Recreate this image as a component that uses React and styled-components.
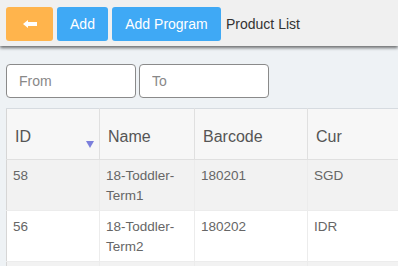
import React from "react";
import styled, { createGlobalStyle } from "styled-components";

const Global = createGlobalStyle`
  html, body { margin: 0; padding: 0; }
  body {
    background: #eef2f5;
    font-family: "Liberation Sans", Arial, sans-serif;
    overflow: hidden;
  }
`;

const Page = styled.div`
  display: flex;
  flex-direction: column;
  width: 398px;
  height: 266px;
  overflow: hidden;
`;

const Toolbar = styled.div`
  display: flex;
  align-items: center;
  gap: 4px;
  height: 46px;
  box-sizing: border-box;
  padding: 2px 6px 0;
  background: #f0f0f0;
  box-shadow: 0 2px 3px rgba(0, 0, 0, 0.55);
  position: relative;
  z-index: 1;
  flex-shrink: 0;
`;

const Button = styled.button`
  height: 34px;
  width: ${(p) => p.$w}px;
  border: none;
  border-radius: 3px;
  background: ${(p) => (p.$variant === "warn" ? "#ffb44c" : "#3fa9f5")};
  color: #fff;
  font-family: "Liberation Sans", Arial, sans-serif;
  font-size: 14px;
  padding: 0;
  display: flex;
  align-items: center;
  justify-content: center;
  cursor: pointer;
`;

const Title = styled.span`
  font-size: 14px;
  color: #333;
  margin-left: 1px;
`;

const Filters = styled.div`
  display: flex;
  gap: 3px;
  padding: 18px 6px 0;
`;

const Input = styled.input`
  width: 130px;
  height: 34px;
  box-sizing: border-box;
  border: 1px solid #8a8a8a;
  border-radius: 4px;
  background: #fff;
  padding: 0 12px;
  font-family: "Liberation Sans", Arial, sans-serif;
  font-size: 14px;
  color: #333;
  outline: none;
  &::placeholder { color: #888; }
`;

const TableWrap = styled.div`
  margin: 10px 0 0 6px;
  overflow: hidden;
`;

const Table = styled.table`
  border-collapse: collapse;
  table-layout: fixed;
  width: 420px;
  border-top: 1px solid #d6dbe0;
  border-left: 1px solid #d6d6d6;
`;

const Th = styled.th`
  position: relative;
  background: #f7f7f7;
  font-weight: normal;
  text-align: left;
  font-size: 16px;
  line-height: 18px;
  color: #555;
  height: 50px;
  box-sizing: border-box;
  padding: 19px 8px 13px;
  border-right: 1px solid #e0e0e0;
  border-bottom: 1px solid #e0e0e0;
`;

const Td = styled.td`
  font-size: 13.5px;
  line-height: 20px;
  color: #666;
  vertical-align: top;
  height: 50px;
  box-sizing: border-box;
  padding: 6px 6px 4px;
  border-right: 1px solid #ececec;
  border-bottom: 1px solid #ececec;
`;

const Tr = styled.tr`
  background: ${(p) => (p.$odd ? "#f2f2f2" : "#ffffff")};
`;

const SortIcon = styled.span`
  position: absolute;
  right: 5px;
  top: 32px;
  width: 0;
  height: 0;
  border-left: 4px solid transparent;
  border-right: 4px solid transparent;
  border-top: 7px solid #7b7fdc;
`;

const rows = [
  { id: "58", name: "18-Toddler-Term1", barcode: "180201", cur: "SGD" },
  { id: "56", name: "18-Toddler-Term2", barcode: "180202", cur: "IDR" },
  { id: "", name: "", barcode: "", cur: "" },
];

export default function App() {
  return (
    <Page>
      <Global />
      <Toolbar>
        <Button $variant="warn" $w={47} aria-label="Back">
          <svg width="14" height="8" viewBox="0 0 14 8">
            <path d="M0 4 L5 0 L5 2 L14 2 L14 6 L5 6 L5 8 Z" fill="#fff" />
          </svg>
        </Button>
        <Button $w={51}>Add</Button>
        <Button $w={109}>Add Program</Button>
        <Title>Product List</Title>
      </Toolbar>
      <Filters>
        <Input placeholder="From" />
        <Input placeholder="To" />
      </Filters>
      <TableWrap>
        <Table>
          <colgroup>
            <col style={{ width: 93 }} />
            <col style={{ width: 95 }} />
            <col style={{ width: 113 }} />
            <col style={{ width: 119 }} />
          </colgroup>
          <thead>
            <tr>
              <Th>
                ID
                <SortIcon />
              </Th>
              <Th>Name</Th>
              <Th>Barcode</Th>
              <Th>Cur</Th>
            </tr>
          </thead>
          <tbody>
            {rows.map((r, i) => (
              <Tr key={i} $odd={i % 2 === 0}>
                <Td>{r.id}</Td>
                <Td>{r.name}</Td>
                <Td>{r.barcode}</Td>
                <Td>{r.cur}</Td>
              </Tr>
            ))}
          </tbody>
        </Table>
      </TableWrap>
    </Page>
  );
}
